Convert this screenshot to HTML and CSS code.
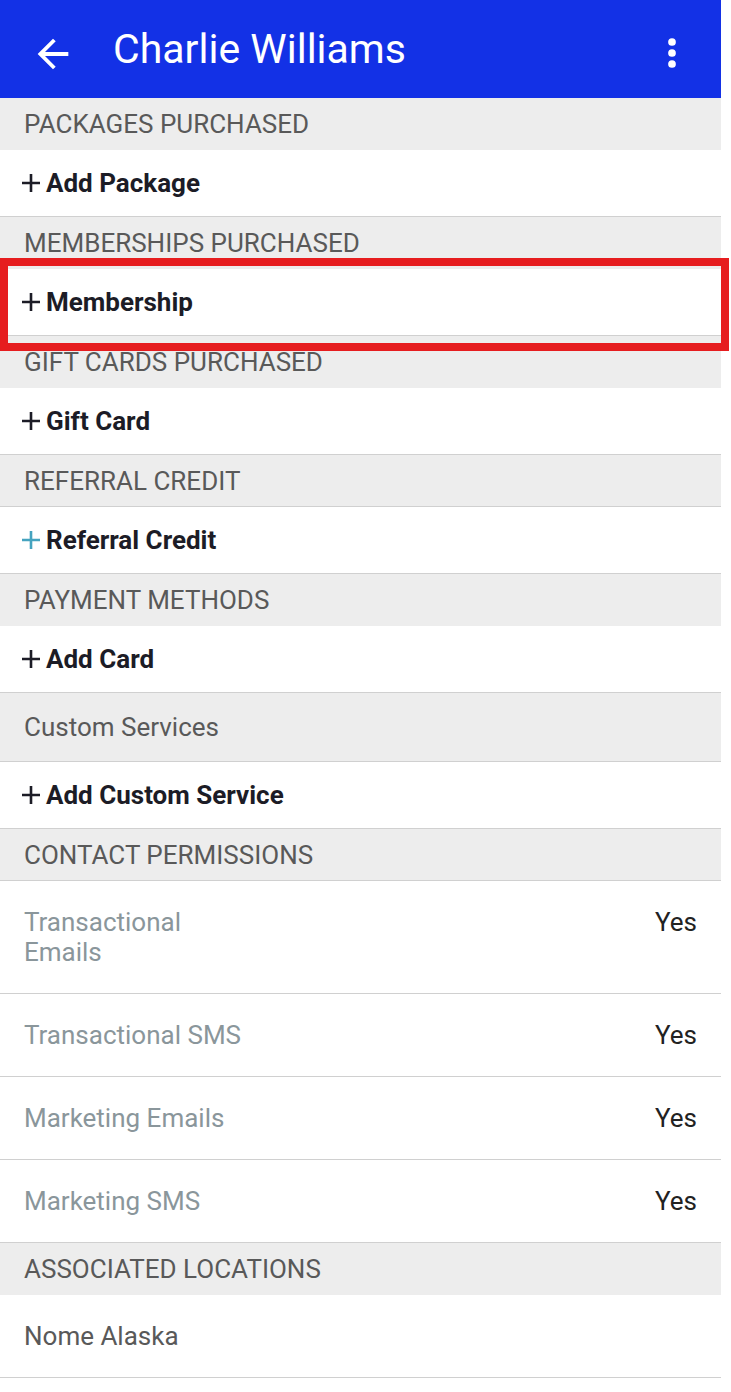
FILE: index.html
```html
<!DOCTYPE html>
<html>
<head>
<meta charset="utf-8" />
<meta name="viewport" content="width=device-width, initial-scale=1.0">
<link rel="stylesheet" href="styles.css">
</head>
<body>
<main class="screen">
  <header class="app-bar">
    <svg class="back" viewBox="0 0 24 24" width="46" height="46"><path d="M20 11H7.83l5.59-5.59L12 4l-8 8 8 8 1.41-1.41L7.83 13H20v-2z" fill="#fff"/></svg>
    <h1 class="title">Charlie Williams</h1>
    <svg class="more" viewBox="0 0 24 24" width="44" height="44"><circle cx="12" cy="6" r="2.1" fill="#fff"/><circle cx="12" cy="12" r="2.1" fill="#fff"/><circle cx="12" cy="18" r="2.1" fill="#fff"/></svg>
  </header>

  <div class="section">PACKAGES PURCHASED</div>
  <a href="#" class="row add"><svg class="plus" viewBox="0 0 18 18" width="18" height="18"><path d="M9 0v18M0 9h18" /></svg><span>Add Package</span></a>

  <div class="section">MEMBERSHIPS PURCHASED</div>
  <a href="#" class="row add highlight"><svg class="plus" viewBox="0 0 18 18" width="18" height="18"><path d="M9 0v18M0 9h18" /></svg><span>Membership</span></a>

  <div class="section">GIFT CARDS PURCHASED</div>
  <a href="#" class="row add"><svg class="plus" viewBox="0 0 18 18" width="18" height="18"><path d="M9 0v18M0 9h18" /></svg><span>Gift Card</span></a>

  <div class="section lined">REFERRAL CREDIT</div>
  <a href="#" class="row add"><svg class="plus plus-teal" viewBox="0 0 18 18" width="18" height="18"><path d="M9 0v18M0 9h18" /></svg><span>Referral Credit</span></a>

  <div class="section">PAYMENT METHODS</div>
  <a href="#" class="row add"><svg class="plus" viewBox="0 0 18 18" width="18" height="18"><path d="M9 0v18M0 9h18" /></svg><span>Add Card</span></a>

  <div class="section section-tall lined">Custom Services</div>
  <a href="#" class="row add"><svg class="plus" viewBox="0 0 18 18" width="18" height="18"><path d="M9 0v18M0 9h18" /></svg><span>Add Custom Service</span></a>

  <div class="section lined">CONTACT PERMISSIONS</div>
  <div class="perm"><span class="perm-label">Transactional Emails</span><span class="perm-value">Yes</span></div>
  <div class="perm"><span class="perm-label">Transactional SMS</span><span class="perm-value">Yes</span></div>
  <div class="perm"><span class="perm-label">Marketing Emails</span><span class="perm-value">Yes</span></div>
  <div class="perm"><span class="perm-label">Marketing SMS</span><span class="perm-value">Yes</span></div>

  <div class="section">ASSOCIATED LOCATIONS</div>
  <div class="perm"><span class="location">Nome Alaska</span></div>
</main>
</body>
</html>
```

FILE: styles.css
```css
:root {--blue: #1331e6; --section-bg: #ededed; --line: #d0d0d0; --label: #595959; --muted: #8a969b; --ink: #1c1c26; --pad: 24px;}
body {margin: 0; background: #fff; font-family: Roboto, 'Noto Sans', sans-serif; font-size: 26px;}
a {text-decoration: none; color: inherit;}
.screen {display: flex; flex-direction: column; width: 721px;}
.app-bar {display: flex; align-items: center; height: 98px; background: var(--blue); color: #fff;}
.back {margin-left: 30px; margin-top: 10px; flex: none;}
.title {margin: 0 0 0 37px; font-size: 41px; font-weight: 400; line-height: 48px;}
.more {margin-left: auto; margin-right: 27px; margin-top: 8px; flex: none;}
.section {display: flex; align-items: center; box-sizing: border-box; height: 52px; padding-left: var(--pad); background: var(--section-bg); color: var(--label);}
.section.lined {border-bottom: 1px solid var(--line);}
.section-tall {height: 69px;}
.row {position: relative; display: flex; align-items: center; box-sizing: border-box; height: 67px; border-bottom: 1px solid var(--line); color: var(--ink); font-weight: 700;}
.plus {margin-left: 22px; margin-right: 6px; flex: none;}
.plus path {stroke: var(--ink); stroke-width: 2.6; fill: none;}
.plus-teal path {stroke: #45a3bf;}
.highlight::after {content: ''; position: absolute; left: 0; top: -11px; width: 729px; height: 93px; box-sizing: border-box; border: 8px solid #e61d1f;}
.perm {display: flex; align-items: flex-start; justify-content: space-between; padding: 26px var(--pad); line-height: 30px; border-bottom: 1px solid var(--line);}
.perm-label {max-width: 228px; color: var(--muted);}
.perm-value {color: #222;}
.location {color: var(--label);}
```
